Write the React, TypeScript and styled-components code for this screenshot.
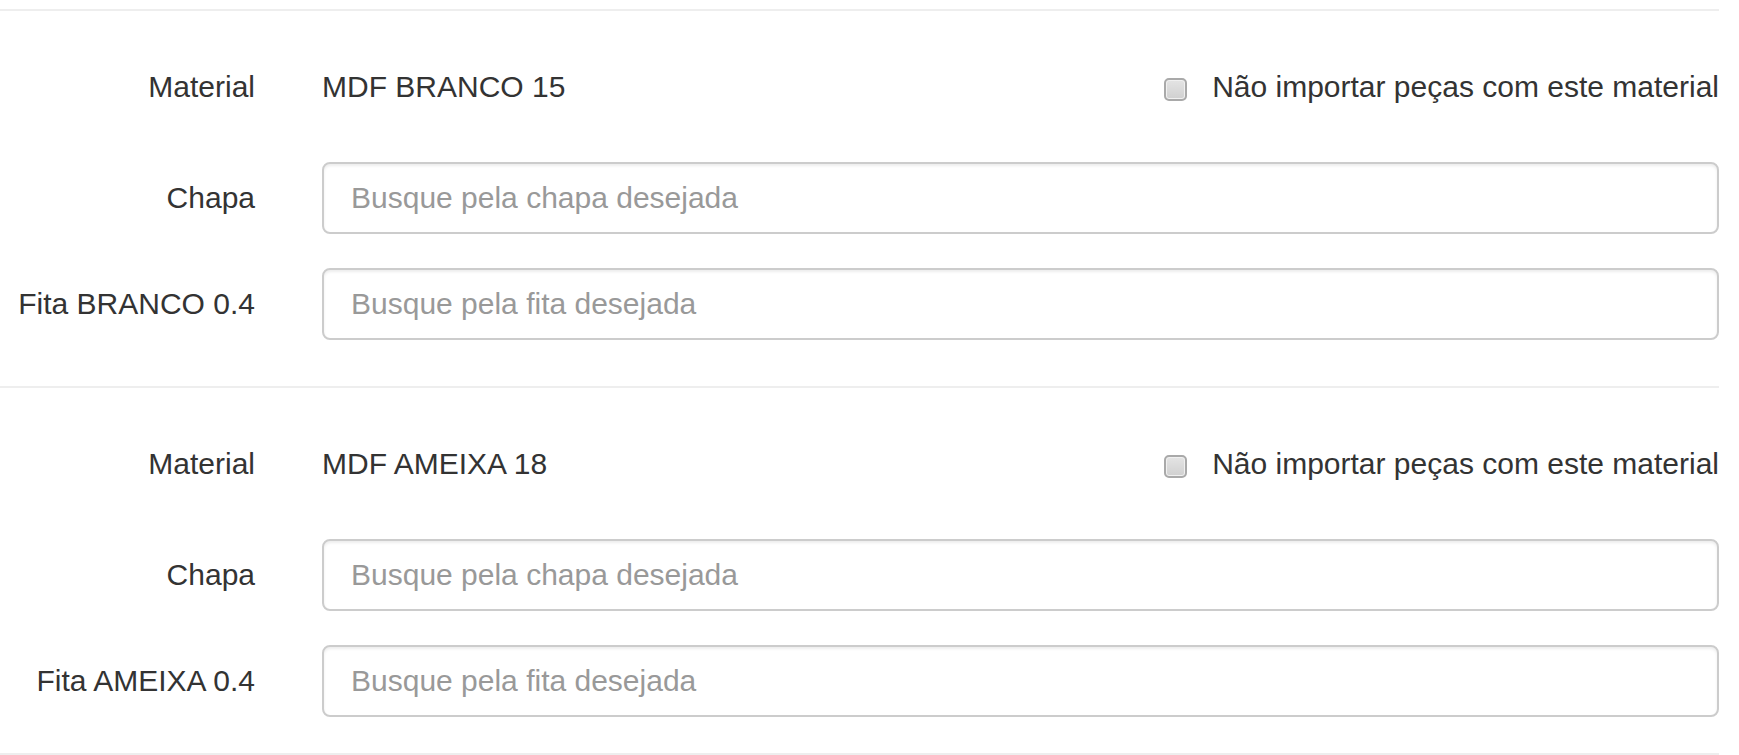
import React from "react"
import styled, { createGlobalStyle } from "styled-components"

const GlobalStyle = createGlobalStyle`
  html, body {
    margin: 0;
    padding: 0;
    background: #fff;
  }
  body {
    font-family: "Liberation Sans", Arial, sans-serif;
    font-size: 30px;
    color: #333;
  }
`

const Page = styled.div`
  width: 1719px;
  padding-top: 9px;
`

/**
 * One material block. The top border acts as the separator line,
 * the last block also draws the closing line.
 */
const Section = styled.section<{ last?: boolean }>`
  border-top: 2px solid #eee;
  padding: 52px 0 ${({ last }) => (last ? "36px" : "46px")};
  ${({ last }) => last && "border-bottom: 2px solid #eee;"}
`

const Row = styled.div<{ gap: number }>`
  display: grid;
  grid-template-columns: 255px 1fr;
  column-gap: 67px;
  align-items: center;
  margin-bottom: ${({ gap }) => gap}px;

  &:last-child {
    margin-bottom: 0;
  }
`

const Label = styled.label`
  text-align: right;
  white-space: nowrap;
  line-height: 48px;
`

const StaticValue = styled.div`
  display: flex;
  align-items: center;
  justify-content: space-between;
  height: 48px;
`

const SkipOption = styled.label`
  display: flex;
  align-items: center;
  gap: 25px;
  white-space: nowrap;
`

const Checkbox = styled.input.attrs({ type: "checkbox" })`
  appearance: none;
  width: 23px;
  height: 23px;
  margin: 4px 0 0;
  box-sizing: border-box;
  border: 2px solid #a9a9a9;
  border-radius: 5px;
  background: linear-gradient(#e4e4e4, #d0d0d0);
  box-shadow: inset 0 0 0 1px #f0f0f0;
`

const SearchInput = styled.input`
  box-sizing: border-box;
  width: 100%;
  height: 72px;
  padding: 0 27px;
  border: 2px solid #ccc;
  border-radius: 8px;
  box-shadow: inset 0 2px 3px rgba(0, 0, 0, 0.075);
  font: inherit;
  color: #555;
  background: #fff;
  outline: none;

  &::placeholder {
    color: #999;
  }
`

type Material = {
  name: string
  edge: string
}

const materials: Material[] = [
  { name: "MDF BRANCO 15", edge: "BRANCO 0.4" },
  { name: "MDF AMEIXA 18", edge: "AMEIXA 0.4" },
]

const MaterialBlock = ({ material, last }: { material: Material; last?: boolean }) => (
  <Section last={last}>
    <Row gap={51}>
      <Label>Material</Label>
      <StaticValue>
        <span>{material.name}</span>
        <SkipOption>
          <Checkbox />
          Não importar peças com este material
        </SkipOption>
      </StaticValue>
    </Row>
    <Row gap={34}>
      <Label>Chapa</Label>
      <SearchInput type="text" placeholder="Busque pela chapa desejada" />
    </Row>
    <Row gap={0}>
      <Label>Fita {material.edge}</Label>
      <SearchInput type="text" placeholder="Busque pela fita desejada" />
    </Row>
  </Section>
)

const App = (): JSX.Element => (
  <>
    <GlobalStyle />
    <Page>
      {materials.map((m, i) => (
        <MaterialBlock key={m.name} material={m} last={i === materials.length - 1} />
      ))}
    </Page>
  </>
)

export default App
